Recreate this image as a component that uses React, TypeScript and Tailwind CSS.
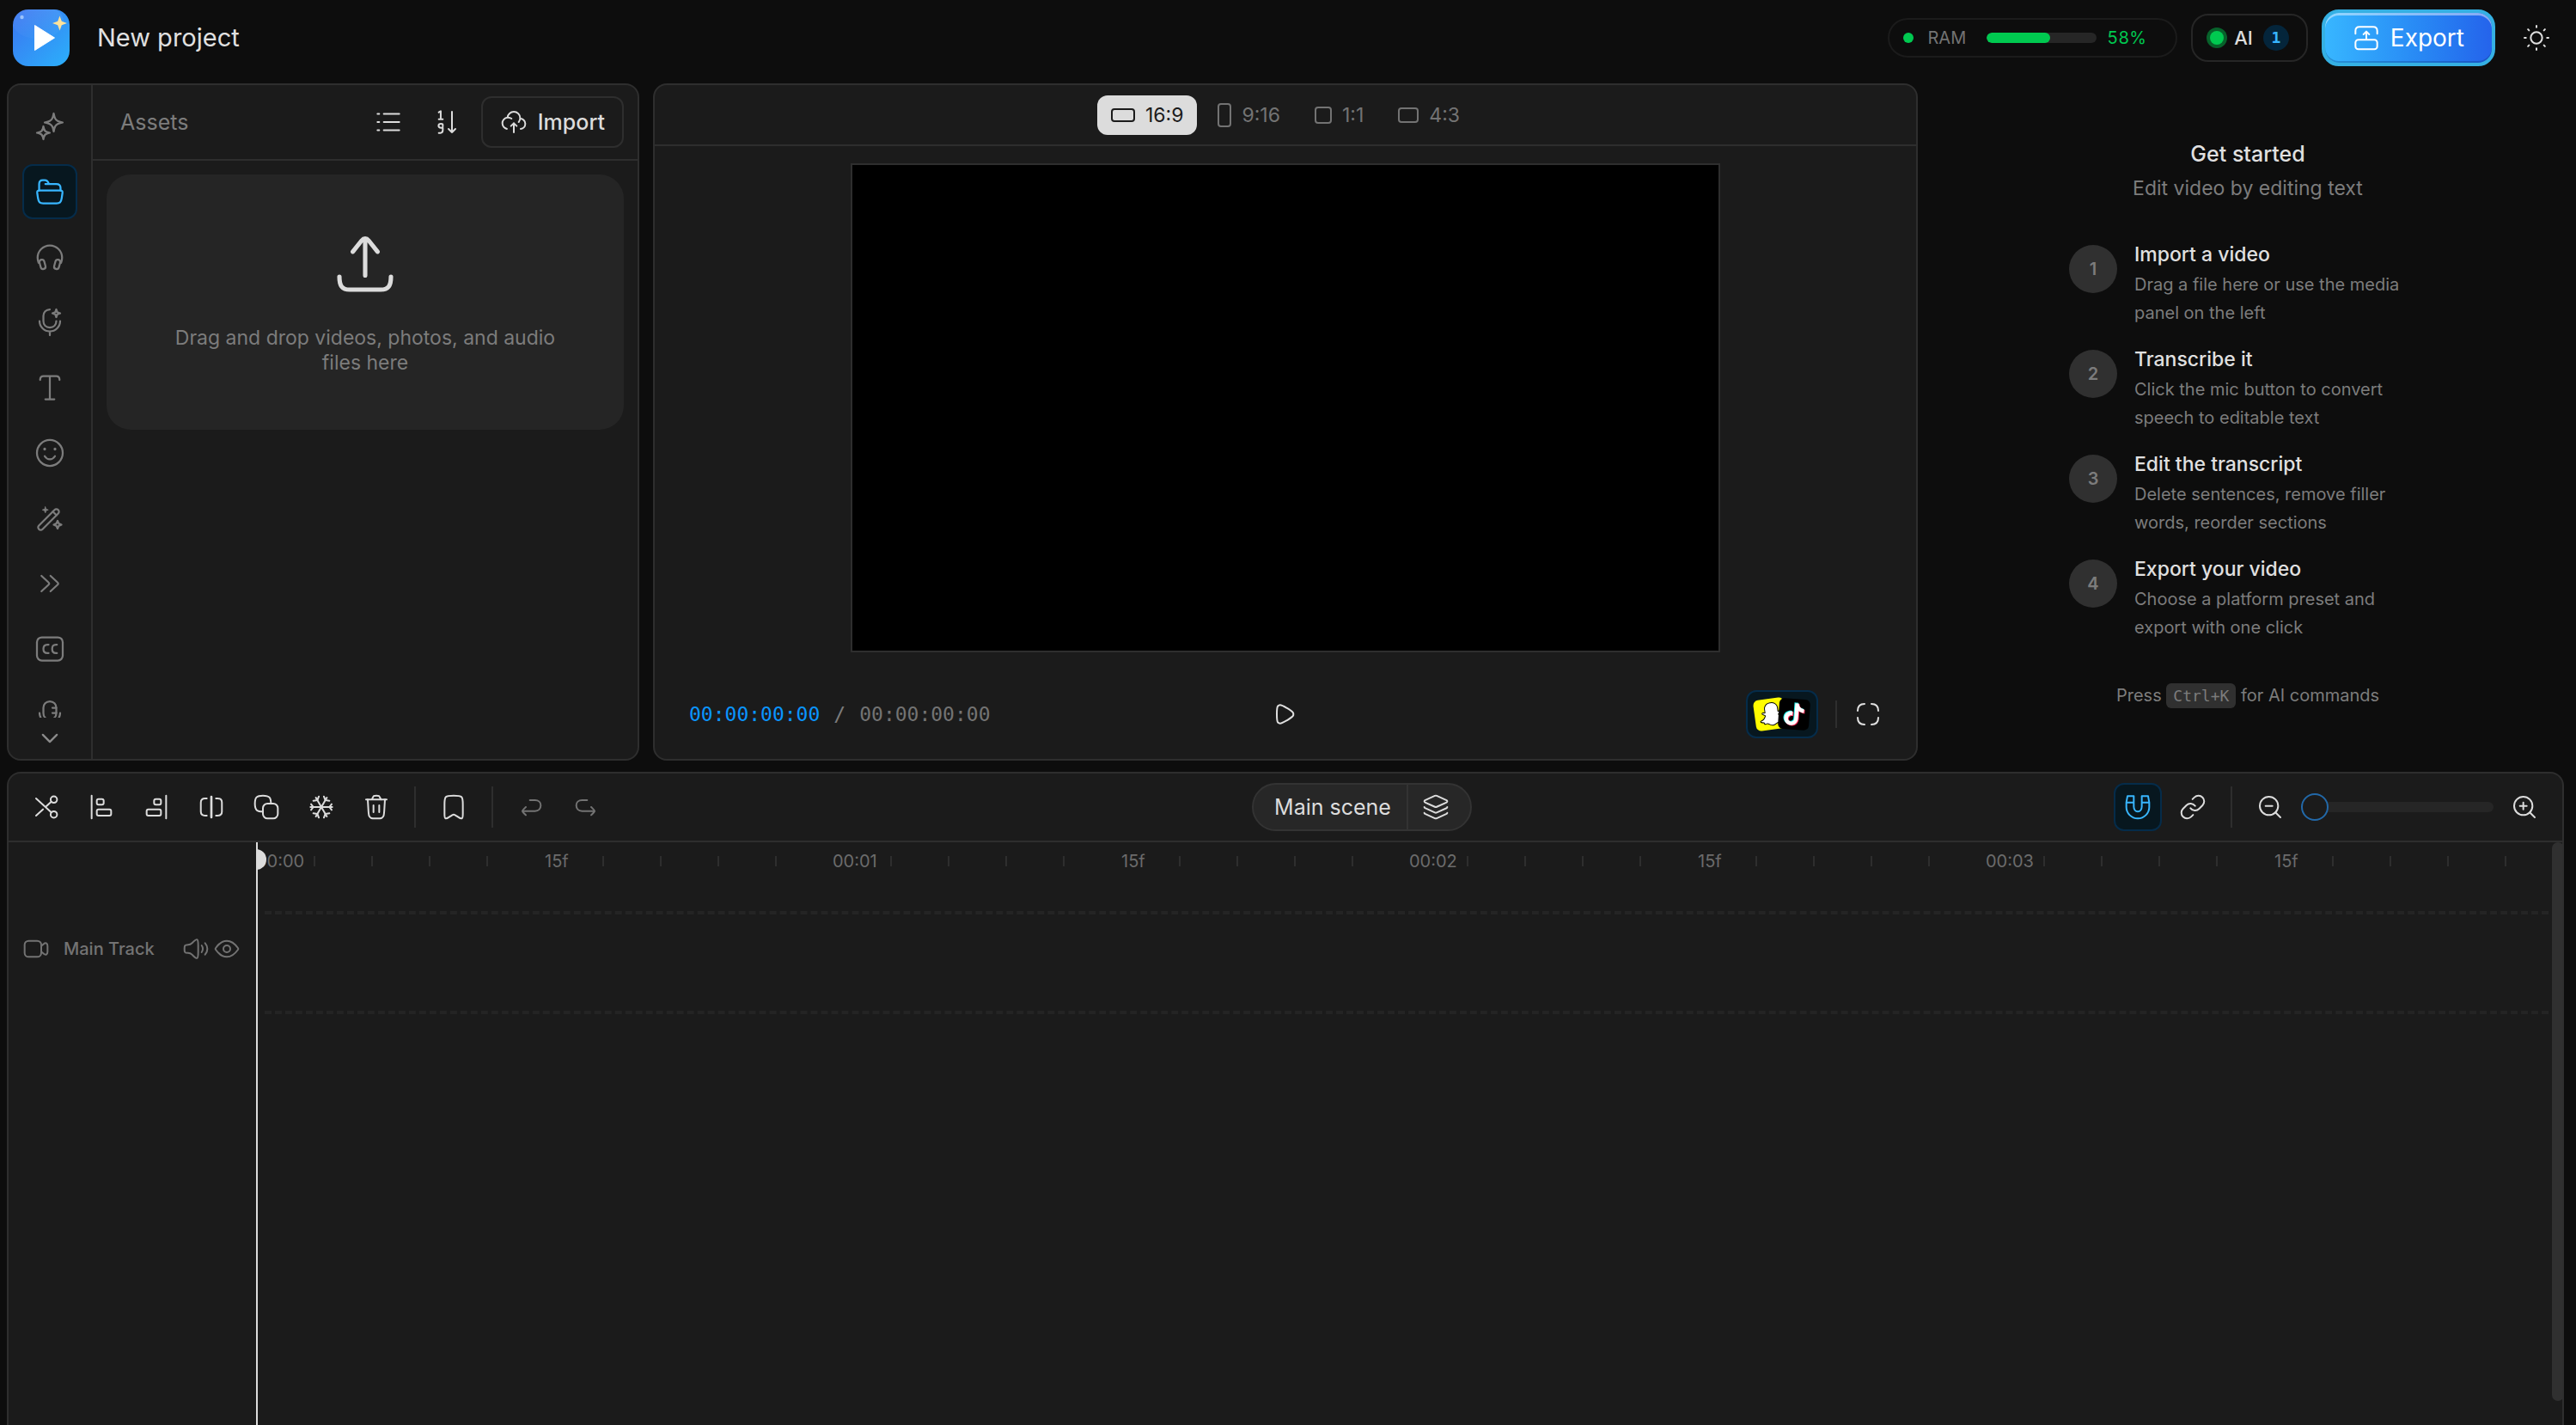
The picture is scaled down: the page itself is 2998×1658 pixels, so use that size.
import { type ReactNode } from "react";
import { Layers, Link, ZoomIn, ZoomOut } from "lucide-react";
import { FaSnapchatGhost } from "react-icons/fa";

function Icon({ className = "size-8", width = 1.5, children }: { className?: string; width?: number; children: ReactNode }) {
  return (
    <svg
      viewBox="0 0 24 24"
      fill="none"
      stroke="currentColor"
      strokeWidth={width}
      strokeLinecap="round"
      strokeLinejoin="round"
      aria-hidden="true"
      className={`shrink-0 ${className}`}
    >
      {children}
    </svg>
  );
}

const MIRROR = "matrix(-1 0 0 1 24 0)";

const railItems: { label: string; art: ReactNode; active?: boolean }[] = [
  {
    label: "AI tools",
    art: (
      <>
        <path d="M15 2L15.54 4.39C16 6.42 17.58 8 19.61 8.46L22 9L19.61 9.54C17.58 10 16 11.58 15.54 13.61L15 16L14.46 13.61C14 11.58 12.42 10 10.39 9.54L8 9L10.39 8.46C12.42 8 14 6.42 14.46 4.39L15 2Z" />
        <path d="M7 12L7.38 13.71C7.71 15.16 8.84 16.29 10.29 16.62L12 17L10.29 17.38C8.84 17.71 7.71 18.84 7.38 20.29L7 22L6.62 20.29C6.29 18.84 5.16 17.71 3.71 17.38L2 17L3.71 16.62C5.16 16.29 6.29 15.16 6.62 13.71L7 12Z" />
      </>
    ),
  },
  {
    label: "Assets",
    active: true,
    art: (
      <>
        <path d="M4 11H20C21.4 11 22 11.6 21.8 13L21.2 17C20.7 20.3 19.7 21 17.2 21H6.8C4.3 21 3.3 20.3 2.8 17L2.2 13C2 11.6 2.6 11 4 11Z" />
        <path d="M3.7 11V6C3.7 3.8 4.7 3 6.5 3H8C9.7 3 10.6 3.8 11.3 6M8.5 6H17C19.3 6 20.3 6.8 20.3 9V11" />
      </>
    ),
  },
  {
    label: "Audio",
    art: (
      <>
        <path d="M3.3 16.5C2.7 15 2.5 13.8 2.5 12.5A9.5 9.5 0 0 1 21.5 12.5C21.5 13.8 21.3 15 20.7 16.5" />
        <rect x="4.4" y="14" width="3.8" height="7.4" rx="1.9" transform="rotate(-15 6.3 17.7)" />
        <rect x="15.8" y="14" width="3.8" height="7.4" rx="1.9" transform="rotate(15 17.7 17.7)" />
      </>
    ),
  },
  {
    label: "Voiceover",
    art: (
      <>
        <path d="M12 2C9 2 7 4.2 7 7V11C7 14 9 16 12 16C15 16 17 14 17 11" />
        <path d="M4 11C4 15.4 7.6 19 12 19C16.4 19 20 15.4 20 11M12 19V22" />
        <path d="M17 2L17.8 4.2L20 5L17.8 5.8L17 8L16.2 5.8L14 5L16.2 4.2Z" />
      </>
    ),
  },
  {
    label: "Text",
    art: <path d="M4.5 6V5.5C4.6 3.8 5.3 3 7 3H17C18.7 3 19.4 3.8 19.5 5.5V6M12 3V21M8.5 21H15.5" />,
  },
  {
    label: "Stickers",
    art: (
      <>
        <circle cx="12" cy="12" r="10" />
        <path d="M8 14.5C8.9 16 10.3 16.9 12 16.9C13.7 16.9 15.1 16 16 14.5" />
        <path d="M8 9V9.01M16 9V9.01" strokeWidth="2.2" />
      </>
    ),
  },
  {
    label: "Effects",
    art: (
      <>
        <rect x="9" y="2.4" width="4" height="21.2" rx="2" transform="rotate(45 11 13)" />
        <path d="M14.3 6.8L17.2 9.7" />
        <path d="M8.5 3.2L9.1 4.9L10.8 5.5L9.1 6.1L8.5 7.8L7.9 6.1L6.2 5.5L7.9 4.9Z" fill="currentColor" strokeWidth="0.6" />
        <path d="M18 14L18.9 16.1L21 17L18.9 17.9L18 20L17.1 17.9L15 17L17.1 16.1Z" />
      </>
    ),
  },
  {
    label: "Transitions",
    art: (
      <path d="M5.5 6L10.9 11C11.7 11.7 11.7 12.3 10.9 13L5.5 18M12.5 6L17.9 11C18.7 11.7 18.7 12.3 17.9 13L12.5 18" />
    ),
  },
  {
    label: "Captions",
    art: (
      <>
        <rect x="2" y="3" width="20" height="18" rx="3.8" />
        <path d="M11 8.7H10C8 8.7 7 9.8 7 12S8 15.3 10 15.3H11M17.5 8.7H16.7C14.7 8.7 13.8 9.8 13.8 12S14.7 15.3 16.7 15.3H17.5" />
      </>
    ),
  },
  {
    label: "Text to speech",
    art: (
      <>
        <path d="M12 2C9 2 7 4.2 7 7V11C7 14 9 16 12 16C15 16 17 14 17 11V7C17 4.2 15 2 12 2Z" />
        <path d="M17 7H14M17 11H14M4 11C4 15.4 7.6 19 12 19C16.4 19 20 15.4 20 11M12 19V22" />
      </>
    ),
  },
];

function Logo() {
  return (
    <svg viewBox="0 0 66 66" className="size-[66px]" aria-label="Home">
      <defs>
        <linearGradient id="logo-fill" x1="0" y1="0" x2="1" y2="1">
          <stop offset="0" stopColor="#3b74f0" />
          <stop offset="1" stopColor="#2bb0fb" />
        </linearGradient>
        <linearGradient id="logo-glow" x1="0" y1="0" x2="0" y2="1">
          <stop offset="0" stopColor="#fff" stopOpacity="0.1" />
          <stop offset="1" stopColor="#fff" stopOpacity="0.02" />
        </linearGradient>
        <clipPath id="logo-clip">
          <rect width="66" height="66" rx="18" />
        </clipPath>
      </defs>
      <g clipPath="url(#logo-clip)">
        <rect width="66" height="66" fill="url(#logo-fill)" />
        <ellipse cx="29" cy="14" rx="30" ry="20" fill="url(#logo-glow)" />
      </g>
      <path d="M25.5 18.5L48.5 33L25.5 47.5Z" fill="#fff" stroke="#fff" strokeWidth="1" strokeLinejoin="round" />
      <path d="M54.500 7.500L56.800 13.700L63 16L56.800 18.300L54.500 24.500L52.200 18.300L46 16L52.200 13.700Z" fill="#ffe29a" />
      <circle cx="10.500" cy="9" r="2.200" fill="#9cc3fb" />
    </svg>
  );
}

const TIKTOK =
  "M12.525.02c1.31-.02 2.61-.01 3.91-.02.08 1.53.63 3.09 1.75 4.17 1.12 1.11 2.7 1.62 4.24 1.79v4.03c-1.44-.05-2.89-.35-4.2-.97-.57-.26-1.1-.59-1.62-.93-.01 2.92.01 5.84-.02 8.75-.08 1.4-.54 2.79-1.35 3.94-1.31 1.92-3.58 3.17-5.91 3.21-1.43.08-2.86-.31-4.08-1.03-2.02-1.19-3.44-3.37-3.65-5.71-.02-.5-.03-1-.01-1.49.18-1.9 1.12-3.72 2.58-4.96 1.66-1.44 3.98-2.13 6.15-1.72.02 1.48-.04 2.96-.04 4.44-.99-.32-2.15-.23-3.02.37-.63.41-1.11 1.04-1.36 1.75-.21.51-.15 1.07-.14 1.61.24 1.64 1.82 3.02 3.5 2.87 1.12-.01 2.19-.66 2.77-1.61.19-.33.4-.67.41-1.06.1-1.79.06-3.57.07-5.36.01-4.03-.01-8.05.02-12.07z";

function Header() {
  return (
    <header className="flex items-center justify-between pl-[15px] pr-[18px] pt-[11px] pb-5">
      <div className="flex items-center gap-8">
        <Logo />
        <h1 className="text-[29px] leading-9 text-[#e0e0e0]">New project</h1>
      </div>
      <div className="flex items-center gap-4">
        <div className="flex h-[46px] items-center gap-4 rounded-full border-2 border-[#1b1b1b] px-4">
          <span className="size-3 rounded-full bg-[#00c950]" />
          <span className="text-[20px] leading-7 text-[#737373]">RAM</span>
          <div className="ml-2 h-3 w-32 overflow-hidden rounded-full bg-[#262626]">
            <div className="h-full w-[58%] rounded-full bg-[#00c950]" />
          </div>
          <span className="-ml-1 w-16 text-[20px] leading-7 tabular-nums text-[#00c950]">58%</span>
        </div>
        <button className="flex h-14 items-center gap-3 rounded-[20px] border-2 border-[#262626] px-5">
          <span className="size-4 rounded-full bg-[#00c950] ring-4 ring-[#00c950]/45" />
          <span className="text-[22px] font-medium leading-8 text-[#dcdcdc]">AI</span>
          <span className="flex size-[30px] items-center justify-center rounded-full bg-[#04253b] font-['DejaVu_Sans_Mono',monospace] text-[18px] font-bold leading-none text-[#38b6ff]">
            1
          </span>
        </button>
        <div className="flex items-center gap-5">
          <button className="flex h-[66px] items-center gap-3 rounded-[20px] border-4 border-[#35b0e3] bg-linear-to-r from-[#38b6ff] to-[#2563eb] px-8 text-white shadow-[inset_0_3px_0_0_rgba(255,255,255,0.45),inset_0_-2px_0_0_rgba(0,40,90,0.25)]">
            <Icon>
              <path d="M2.500 8.500V6C2.500 3.500 3.800 2.500 6 2.500H18C20.200 2.500 21.500 3.500 21.500 6V8.500" />
              <rect x="2.500" y="13.700" width="19" height="8.300" rx="2.500" />
              <path d="M12 13.500V6.500M9.500 9L12 6.500L14.500 9" />
            </Icon>
            <span className="text-[28px] leading-9">Export</span>
          </button>
          <button aria-label="Toggle theme" className="flex size-14 items-center justify-center text-[#e0e0e0]">
            <Icon>
              <circle cx="12" cy="12" r="5" />
              <path d="M12 1.500V2.800M12 21.200V22.500M19.400 4.600L18.500 5.500M5.500 18.500L4.600 19.400M22.500 12H21.200M2.800 12H1.500M19.400 19.400L18.500 18.500M5.500 5.500L4.600 4.600" />
            </Icon>
          </button>
        </div>
      </div>
    </header>
  );
}

function AssetsPanel() {
  return (
    <section className="flex min-w-0 overflow-hidden rounded-2xl border-2 border-[#2e2e2e] bg-[#1b1b1b]">
      <nav className="flex w-[98px] shrink-0 flex-col items-center border-r-2 border-[#2e2e2e]">
        <div className="flex min-h-0 flex-1 flex-col gap-3 overflow-hidden pt-4">
          {railItems.map((item) => (
            <button
              key={item.label}
              aria-label={item.label}
              className={
                item.active
                  ? "flex size-16 shrink-0 items-center justify-center rounded-xl border-2 border-[#052c4a] bg-[#07171f] text-[#38b6ff]"
                  : "flex size-16 shrink-0 items-center justify-center rounded-xl text-[#7c7c7c]"
              }
            >
              <Icon className="size-9">{item.art}</Icon>
            </button>
          ))}
        </div>
        <button aria-label="Scroll down" className="flex h-12 w-full items-center justify-center text-[#8a8a8a]">
          <Icon className="size-7" width={2}>
            <path d="M5 8.500L12 15.500L19 8.500" />
          </Icon>
        </button>
      </nav>
      <div className="flex min-w-0 flex-1 flex-col">
        <div className="flex h-[88px] items-center justify-between border-b-2 border-[#2e2e2e] pl-8 pr-4">
          <h2 className="text-[25px] leading-9 text-[#7c7c7c]">Assets</h2>
          <div className="flex items-center gap-3 text-[#dcdcdc]">
            <button aria-label="List view" className="flex size-14 items-center justify-center">
              <Icon>
                <path d="M8 4.800H21.500M8 12H21.500M8 19.200H21.500M2.500 4.800H4M2.500 12H4M2.500 19.200H4" />
              </Icon>
            </button>
            <button aria-label="Sort" className="flex size-14 items-center justify-center">
              <Icon>
                <path d="M5 3.500L6.700 2.500V9.500M5 9.500H8.500" />
                <path d="M8.500 16V14.500C8.500 13.700 8 13.500 7 13.500C5.500 13.500 4.800 13.700 4.800 15.200C4.800 16.800 5.500 17 7 17H8.500V19C8.500 20.700 8 21.500 6.500 21.500H5" />
                <path d="M16.500 3V21M13.500 18L16.500 21L19.500 18" />
              </Icon>
            </button>
            <button className="flex h-[60px] items-center gap-3 rounded-xl border-2 border-[#2e2e2e] px-5">
              <Icon>
                <path d="M17.480 9.010C19.980 9 22 11.030 22 13.520C22 15.840 20.250 17.750 18 18M17.480 9.010C17.490 8.850 17.500 8.680 17.500 8.510C17.500 5.470 15.040 3 12 3C9.120 3 6.760 5.210 6.520 8.030M17.480 9.010C17.380 10.150 16.930 11.180 16.240 12.020M6.520 8.030C3.980 8.270 2 10.410 2 13.020C2 15.440 3.720 17.460 6 17.930M6.520 8.030C7.900 7.930 9.160 8.380 10 9.010" />
                <path d="M12 13V21M9.500 15.500L12 13L14.500 15.500" />
              </Icon>
              <span className="text-[25px] font-medium leading-9">Import</span>
            </button>
          </div>
        </div>
        <div className="p-4">
          <button className="flex h-[297px] w-full flex-col items-center justify-center gap-9 rounded-[28px] bg-[#252525] px-16 pt-1">
            <Icon className="size-[72px] text-[#dcdcdc]" width={1.7}>
              <path d="M12 2.500V16.500M7.200 7.300L10.600 3C11.500 1.900 12.500 1.900 13.400 3L16.800 7.300" />
              <path d="M2 17C2 20.500 3 22 6 22H18C21 22 22 20.500 22 17" />
            </Icon>
            <span className="max-w-[480px] text-center text-[23px] leading-[29px] text-[#7c7c7c]">
              Drag and drop videos, photos, and audio files here
            </span>
          </button>
        </div>
      </div>
    </section>
  );
}

const ratios = [
  { label: "16:9", box: "h-4 w-7", active: true },
  { label: "9:16", box: "h-7 w-4" },
  { label: "1:1", box: "size-5" },
  { label: "4:3", box: "h-[18px] w-6" },
];

function PreviewPanel() {
  return (
    <section className="flex min-w-0 flex-col overflow-hidden rounded-2xl border-2 border-[#2e2e2e] bg-[#1b1b1b]">
      <div className="flex h-[71px] shrink-0 items-center justify-center gap-2 border-b-2 border-[#2e2e2e]">
        {ratios.map((r) => (
          <button
            key={r.label}
            className={
              r.active
                ? "flex h-[46px] items-center gap-3 rounded-xl bg-[#dcdcdc] px-4 text-[#1b1b1b]"
                : "flex h-[46px] items-center gap-3 rounded-xl px-4 text-[#737373]"
            }
          >
            <span className={`rounded-sm border-2 border-current ${r.box}`} />
            <span className="text-[23px] leading-8">{r.label}</span>
          </button>
        ))}
      </div>
      <div className="flex min-h-0 flex-1 justify-center p-5">
        <div className="aspect-video h-full border-2 border-[#2e2e2e] bg-black" />
      </div>
      <div className="grid h-[104px] shrink-0 grid-cols-[1fr_auto_1fr] items-center px-7">
        <div className="flex gap-4 pl-3 font-['DejaVu_Sans_Mono',monospace] text-[23px] leading-8">
          <span className="text-[#0a95ff]">00:00:00:00</span>
          <span className="text-[#7c7c7c]">/</span>
          <span className="text-[#737373]">00:00:00:00</span>
        </div>
        <button aria-label="Play" className="flex size-14 items-center justify-center text-[#e0e0e0]">
          <Icon>
            <path d="M18.890 12.850C18.500 14.300 16.800 15.300 13.300 17.400C9.900 19.400 8.200 20.400 6.900 20C6.300 19.800 5.800 19.500 5.400 19.100C4.500 18.100 4.500 16 4.500 12S4.500 5.900 5.400 4.900C5.800 4.500 6.300 4.200 6.900 4C8.200 3.600 9.900 4.600 13.300 6.600C16.800 8.700 18.500 9.700 18.900 11.200C19 11.700 19 12.300 18.890 12.850Z" />
          </Icon>
        </button>
        <div className="flex items-center justify-end">
          <button
            aria-label="Platform guides"
            className="flex h-14 w-[84px] items-center justify-center rounded-xl border-2 border-[#052c4a] bg-[#07171f]"
          >
            <span className="flex size-9 -rotate-8 items-center justify-center rounded-md bg-[#fffc00] pl-1">
              <FaSnapchatGhost className="size-7 overflow-visible text-white" stroke="#000" strokeWidth={18} />
            </span>
            <span className="-ml-2 flex size-9 rotate-4 items-center justify-center rounded-md bg-black">
              <svg viewBox="-1 -1 26 26" className="size-7" aria-hidden="true">
                <path d={TIKTOK} fill="#25f4ee" transform="translate(-0.900 -0.700)" />
                <path d={TIKTOK} fill="#fe2c55" transform="translate(0.900 0.700)" />
                <path d={TIKTOK} fill="#fff" />
              </svg>
            </span>
          </button>
          <span className="ml-5 mr-2 h-8 w-0.5 bg-[#2e2e2e]" />
          <button aria-label="Full screen" className="flex size-14 items-center justify-center text-[#e0e0e0]">
            <Icon>
              <path d="M3 9C3 5 5 3 9 3M15 3C19 3 21 5 21 9M21 15C21 19 19 21 15 21M9 21C5 21 3 19 3 15" />
            </Icon>
          </button>
        </div>
      </div>
    </section>
  );
}

const steps = [
  { title: "Import a video", body: "Drag a file here or use the media panel on the left" },
  { title: "Transcribe it", body: "Click the mic button to convert speech to editable text" },
  { title: "Edit the transcript", body: "Delete sentences, remove filler words, reorder sections" },
  { title: "Export your video", body: "Choose a platform preset and export with one click" },
];

function GettingStarted() {
  return (
    <aside className="flex min-w-0 flex-col items-center justify-center pt-1">
      <h2 className="text-[25px] font-medium leading-9 text-[#e0e0e0]">Get started</h2>
      <p className="mt-1.5 text-[23px] leading-8 text-[#7c7c7c]">Edit video by editing text</p>
      <ol className="mt-[46px] flex flex-col gap-[22px]">
        {steps.map((s, i) => (
          <li key={s.title} className="flex gap-5">
            <span className="mt-1 flex size-14 shrink-0 items-center justify-center rounded-full bg-[#303030] text-[20px] font-semibold leading-none text-[#7c7c7c]">
              {i + 1}
            </span>
            <div className="w-[340px]">
              <h3 className="text-[23px] font-medium leading-[30px] text-[#e0e0e0]">{s.title}</h3>
              <p className="mt-1 pr-5 text-[20px] leading-[33px] text-[#7c7c7c]">{s.body}</p>
            </div>
          </li>
        ))}
      </ol>
      <p className="mt-[46px] text-[20px] leading-[33px] text-[#7c7c7c]">
        Press{" "}
        <kbd className="rounded-md bg-[#303030] px-2 py-1 font-['DejaVu_Sans_Mono',monospace] text-[18px]">Ctrl+K</kbd> for AI
        commands
      </p>
    </aside>
  );
}

const editTools: { label: string; art: ReactNode }[] = [
  {
    label: "Split",
    art: (
      <>
        <circle cx="18.500" cy="5.500" r="2.800" />
        <circle cx="18.500" cy="18.500" r="2.800" />
        <path d="M3 4.500L16.300 16.700M3 19.500L9 14M12 11.300L16.300 7.300" />
      </>
    ),
  },
  {
    label: "Trim left",
    art: (
      <>
        <path d="M3.500 2V22" />
        <rect x="8" y="5" width="6" height="5" rx="1.500" />
        <rect x="8" y="14" width="12.500" height="5.500" rx="1.500" />
      </>
    ),
  },
  {
    label: "Trim right",
    art: (
      <g transform={MIRROR}>
        <path d="M3.500 2V22" />
        <rect x="8" y="5" width="6" height="5" rx="1.500" />
        <rect x="8" y="14" width="12.500" height="5.500" rx="1.500" />
      </g>
    ),
  },
  {
    label: "Split audio",
    art: (
      <>
        <path d="M8 4.500H6.500C3.800 4.500 2.800 5.500 2.800 8V16C2.800 18.500 3.800 19.500 6.500 19.500H8" />
        <path d="M16 4.500H17.500C20.200 4.500 21.200 5.500 21.200 8V16C21.200 18.500 20.200 19.500 17.500 19.500H16" />
        <path d="M12 3V21" strokeWidth="2" />
      </>
    ),
  },
  {
    label: "Duplicate",
    art: (
      <>
        <rect x="9" y="9" width="13" height="13" rx="4" />
        <path d="M9 16C4 16 2 15 2 9C2 3.500 3.500 2 9 2C15 2 16 4 16 9" />
      </>
    ),
  },
  {
    label: "Freeze frame",
    art: (
      <>
        <path d="M2.500 12H21.500M7.200 3.800L16.800 20.200M16.800 3.800L7.200 20.200" />
        <path d="M3 9.500L5 12L3 14.500M21 9.500L19 12L21 14.500M5 6.500L8.500 6L9.800 2.800M14.200 2.800L15.500 6L19 6.500M5 17.500L8.500 18L9.800 21.200M14.200 21.200L15.500 18L19 17.500" />
      </>
    ),
  },
  {
    label: "Delete",
    art: (
      <>
        <path d="M19.500 5.500L18.880 15.520C18.720 18.090 18.640 19.370 18 20.290C17.680 20.740 17.270 21.130 16.800 21.420C15.840 22 14.560 22 11.990 22C9.420 22 8.140 22 7.180 21.410C6.700 21.130 6.300 20.740 5.980 20.280C5.340 19.360 5.260 18.080 5.100 15.520L4.500 5.500" />
        <path d="M3 5.500H21M16.060 5.500L15.370 4.090C14.920 3.160 14.690 2.690 14.300 2.400C13.600 2 13.070 2 12.030 2C10.970 2 10.440 2 9.720 2.410C9.320 2.720 9.100 3.200 8.660 4.170L8.050 5.500M9.500 16.500V10.500M14.500 16.500V10.500" />
      </>
    ),
  },
];

const undoArt = (
  <path d="M11 6H15.500C18.500 6 20.500 8 20.500 10.500C20.500 13.500 18.500 15.500 15.500 15.500H4.500M7.500 12C6.500 13 4.500 14.700 4.500 15.500C4.500 16.300 6.500 18 7.500 19" />
);

function Divider() {
  return <span className="mx-2 h-12 w-0.5 bg-[#2e2e2e]" />;
}

function Toolbar() {
  const btn = "flex size-14 items-center justify-center rounded-xl";
  return (
    <div className="flex h-20 shrink-0 items-center justify-between border-b-2 border-[#2e2e2e] px-4 text-[#dcdcdc]">
      <div className="flex items-center gap-2">
        {editTools.map((t) => (
          <button key={t.label} aria-label={t.label} className={btn}>
            <Icon>{t.art}</Icon>
          </button>
        ))}
        <Divider />
        <button aria-label="Bookmark" className={btn}>
          <Icon>
            <path d="M4 17.980V9.710C4 6.070 4 4.250 5.170 3.130C6.340 2 8.230 2 12 2C15.770 2 17.660 2 18.830 3.130C20 4.250 20 6.070 20 9.710V17.980C20 20.290 20 21.440 19.230 21.850C17.730 22.650 14.930 19.990 13.590 19.190C12.820 18.720 12.430 18.490 12 18.490C11.570 18.490 11.180 18.720 10.410 19.190C9.070 19.990 6.270 22.650 4.770 21.850C4 21.440 4 20.290 4 17.980Z" />
          </Icon>
        </button>
        <Divider />
        <button aria-label="Undo" className={`${btn} text-[#737373]`}>
          <Icon>{undoArt}</Icon>
        </button>
        <button aria-label="Redo" className={`${btn} text-[#737373]`}>
          <Icon>
            <g transform={MIRROR}>{undoArt}</g>
          </Icon>
        </button>
      </div>

      <div className="flex h-14 items-stretch overflow-hidden rounded-full border-2 border-[#333333] bg-[#272727]">
        <button className="pl-6 pr-[18px] text-[25px] leading-9">Main scene</button>
        <button aria-label="Scenes" className="flex w-[74px] items-center justify-center border-l-2 border-[#333333] pr-2">
          <Layers className="size-8" strokeWidth={1.5} />
        </button>
      </div>

      <div className="flex items-center gap-2">
        <button aria-label="Snapping" className={`${btn} border-2 border-[#052c4a] bg-[#07171f] text-[#38b6ff]`}>
          <Icon>
            <path d="M2 12V8L3 2.500H8.500V11.500C8.500 14 10 16 12 16C14 16 15.500 14 15.500 11.500V2.500H21L22 8V12C22 17.500 17.500 22 12 22C6.500 22 2 17.500 2 12ZM2.200 8H8.500M15.500 8H21.800" />
          </Icon>
        </button>
        <button aria-label="Link clips" className={btn}>
          <Link className="size-8" strokeWidth={1.5} />
        </button>
        <Divider />
        <button aria-label="Zoom out" className={btn}>
          <ZoomOut className="size-8" strokeWidth={1.5} />
        </button>
        <input
          type="range"
          aria-label="Timeline zoom"
          min={0}
          max={100}
          defaultValue={0}
          className="h-8 w-56 appearance-none bg-transparent [&::-webkit-slider-runnable-track]:h-3 [&::-webkit-slider-runnable-track]:rounded-full [&::-webkit-slider-runnable-track]:bg-[#262626] [&::-webkit-slider-thumb]:-mt-2.5 [&::-webkit-slider-thumb]:size-8 [&::-webkit-slider-thumb]:appearance-none [&::-webkit-slider-thumb]:rounded-full [&::-webkit-slider-thumb]:border-2 [&::-webkit-slider-thumb]:border-[#2268a8] [&::-webkit-slider-thumb]:bg-[#1b1b1b]"
        />
        <button aria-label="Zoom in" className={btn}>
          <ZoomIn className="size-8" strokeWidth={1.5} />
        </button>
      </div>
    </div>
  );
}

const SECOND_WIDTH = 671;
const TICKS = Array.from({ length: 40 }, (_, i) => i);

function tickLabel(i: number) {
  if (i % 10 === 0) return `00:0${i / 10}`;
  if (i % 5 === 0) return "15f";
  return null;
}

function Timeline() {
  return (
    <section className="mt-[13px] flex min-h-0 flex-[379_1_0%] flex-col overflow-hidden rounded-t-2xl border-2 border-b-0 border-[#2e2e2e] bg-[#1b1b1b]">
      <Toolbar />
      <div className="flex min-h-0 flex-1">
        <div className="w-72 shrink-0 pt-20">
          <div className="flex h-[88px] items-center pl-4 pr-[18px] text-[#737373]">
            <Icon>
              <rect x="2" y="5" width="14.500" height="14" rx="3.500" />
              <path d="M16.500 9.500L18.500 7.800C20.300 6.300 22 7 22 9.300V14.700C22 17 20.300 17.700 18.500 16.200L16.500 14.500" />
            </Icon>
            <span className="ml-4 text-[20px] font-medium leading-7">Main Track</span>
            <div className="ml-auto flex gap-1">
              <button aria-label="Mute track">
                <Icon>
                  <path d="M14 14.800V9.160C14 5.900 14 4.260 13 3.880C12 3.500 10.900 4.660 8.600 6.970C7.400 8.200 6.900 8.400 5.200 8.400C3.600 8.400 2.900 8.400 2.400 9.200C2 9.900 2 10.600 2 12S2 14.100 2.400 14.800C2.900 15.600 3.600 15.600 5.200 15.600C6.900 15.600 7.400 15.800 8.600 17C10.900 19.300 12 20.500 13 20.100C14 19.700 14 18.100 14 14.800Z" />
                  <path d="M17 9C17.600 9.800 18 10.900 18 12S17.600 14.200 17 15M20 7C21.200 8.300 22 10.100 22 12S21.200 15.700 20 17" />
                </Icon>
              </button>
              <button aria-label="Hide track">
                <Icon>
                  <path d="M21.540 11.040C21.850 11.470 22 11.680 22 12C22 12.320 21.850 12.530 21.540 12.960C20.180 14.870 16.690 19 12 19C7.310 19 3.820 14.870 2.460 12.960C2.150 12.530 2 12.320 2 12C2 11.680 2.150 11.470 2.460 11.040C3.820 9.130 7.310 5 12 5C16.690 5 20.180 9.130 21.540 11.040Z" />
                  <circle cx="12" cy="12" r="3" />
                </Icon>
              </button>
            </div>
          </div>
        </div>
        <div className="relative min-w-0 flex-1 overflow-hidden">
          <div className="relative h-20 text-[20px] leading-7 text-[#6b6b6b]">
            {TICKS.map((i) => {
              const label = tickLabel(i);
              const left = Math.round((i * SECOND_WIDTH) / 10);
              return label ? (
                <span key={i} className="absolute top-2" style={{ left }}>
                  {label}
                </span>
              ) : (
                <span key={i} className="absolute top-4 h-3 w-0.5 bg-[#2e2e2e]" style={{ left }} />
              );
            })}
          </div>
          <div className="ml-2.5 mr-1 h-[120px] border-y-4 border-dashed border-[#242424]" />
          <div className="absolute inset-y-0 left-0 w-0.5 bg-[#dcdcdc]" />
          <div className="absolute -left-3 top-2 size-6 rounded-full bg-[#dcdcdc]" />
        </div>
        <div className="-mr-0.5 w-3.5 shrink-0 pb-7">
          <div className="h-full rounded-full bg-[#303030]" />
        </div>
      </div>
    </section>
  );
}

export default function App() {
  return (
    <div className="flex h-screen min-h-[1200px] flex-col overflow-hidden bg-[#0d0d0d] font-['Inter',sans-serif] text-[#dcdcdc]">
      <Header />
      <main className="flex min-h-0 flex-1 flex-col pl-2 pr-3.5">
        <div className="grid min-h-0 flex-[394_1_0%] grid-cols-[minmax(0,1fr)_minmax(0,2fr)_minmax(0,1fr)] grid-rows-[minmax(0,1fr)] gap-4">
          <AssetsPanel />
          <PreviewPanel />
          <GettingStarted />
        </div>
        <Timeline />
      </main>
    </div>
  );
}
